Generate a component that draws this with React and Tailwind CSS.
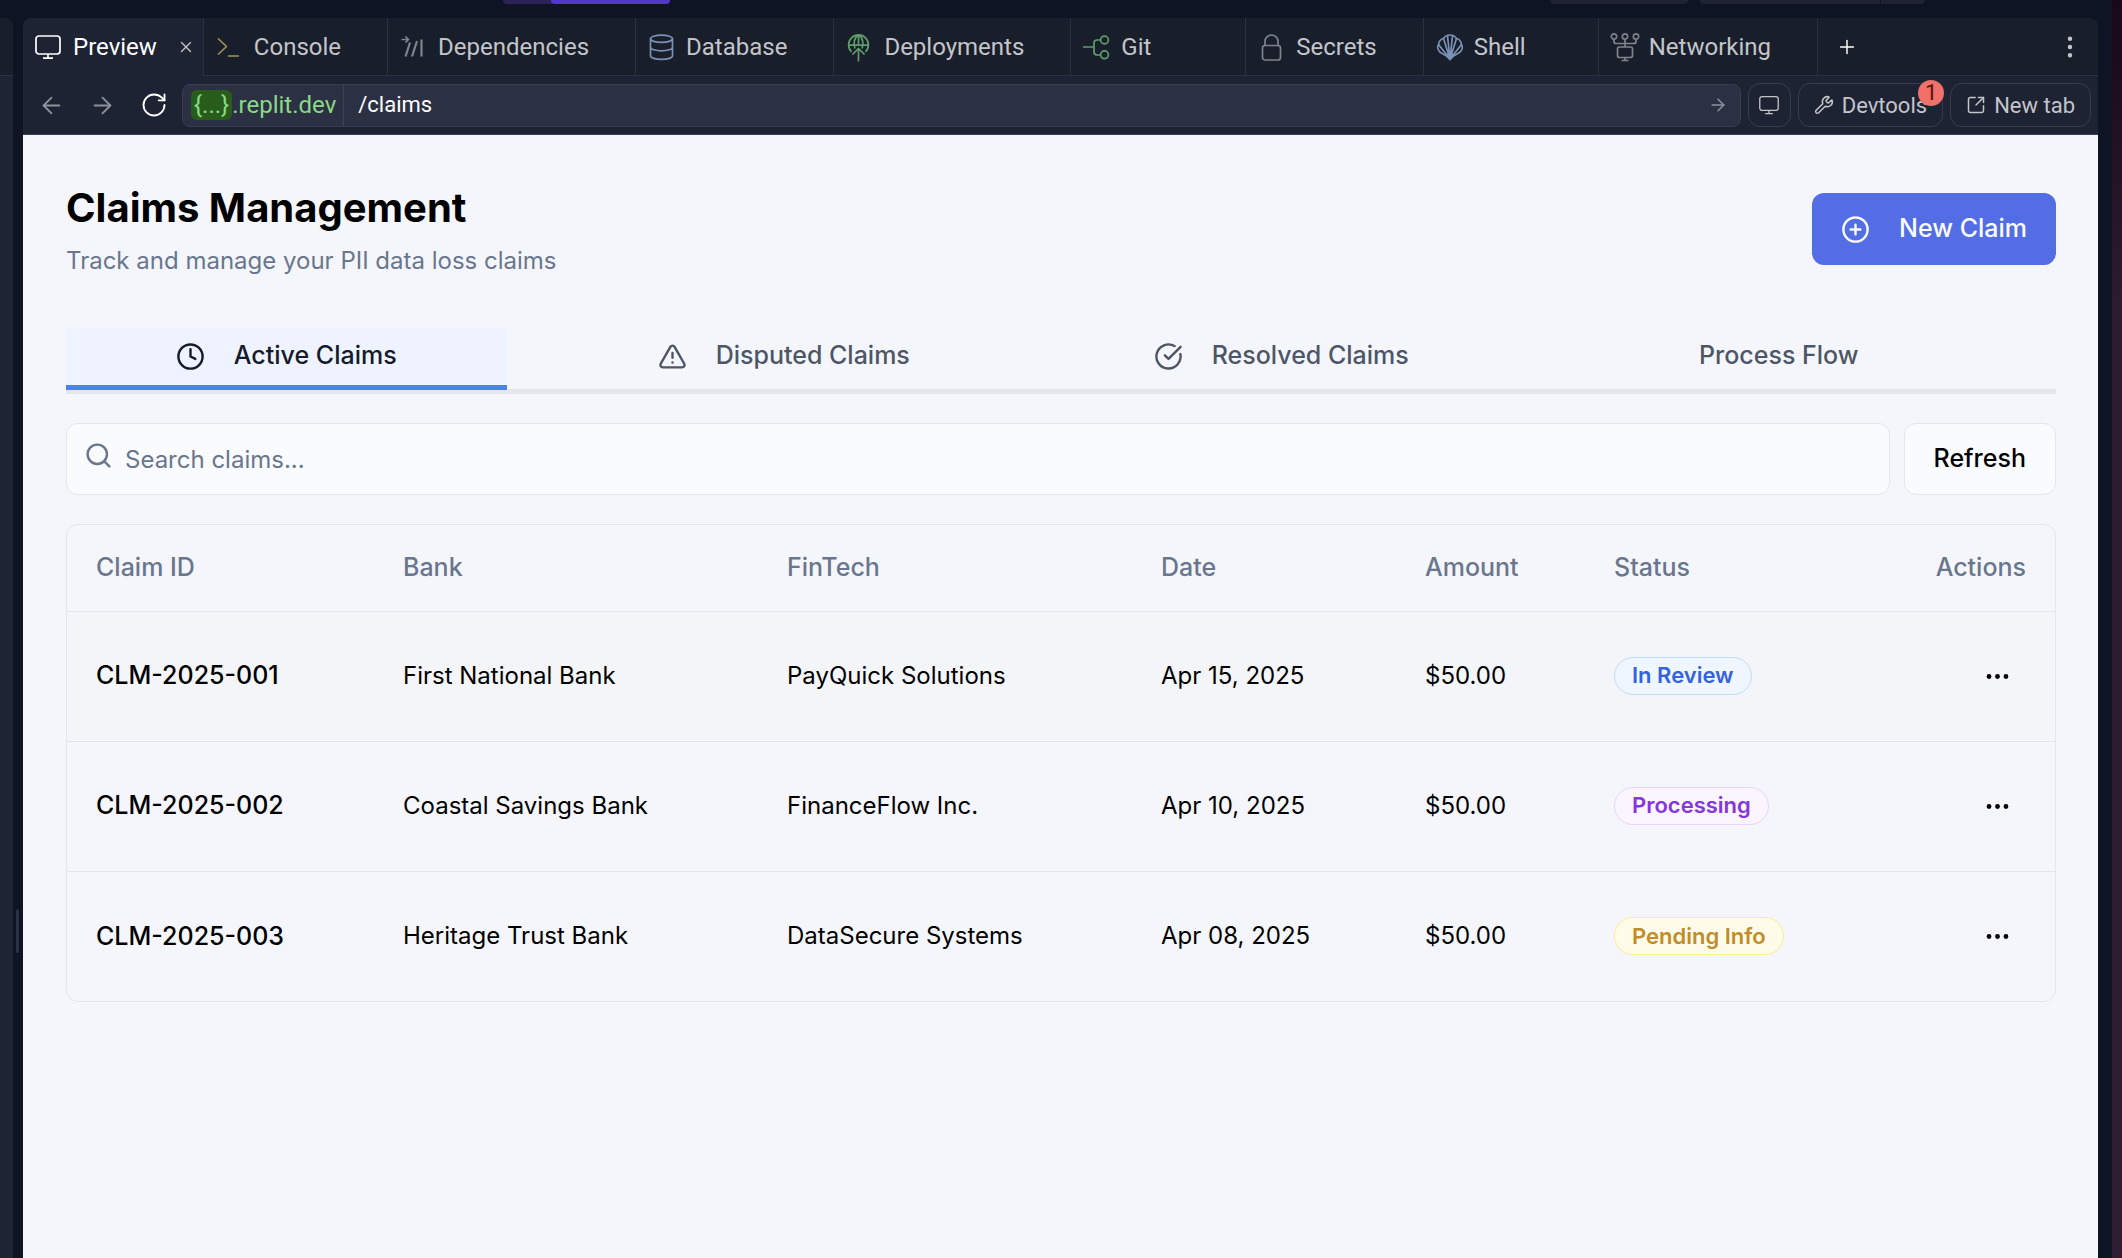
import React from "react";
import {
  ArrowLeft,
  ArrowRight,
  CircleCheckBig,
  CirclePlus,
  Clock,
  Ellipsis,
  EllipsisVertical,
  Plus,
  RotateCw,
  Search,
  SquareArrowOutUpRight,
  TriangleAlert,
  Wrench,
  X,
} from "lucide-react";

/* 26px line icons for the workspace tabs */
function Glyph({ className, children }) {
  return (
    <svg
      viewBox="0 0 26 26"
      fill="none"
      stroke="currentColor"
      strokeWidth="1.7"
      strokeLinejoin="round"
      aria-hidden="true"
      className={`shrink-0 overflow-visible ${className}`}
    >
      {children}
    </svg>
  );
}

const MonitorGlyph = ({ className }) => (
  <Glyph className={className}>
    <rect x="1" y="2" width="24" height="18" rx="3" />
    <path d="M13 20v4M8 24.2h10" />
  </Glyph>
);
const ConsoleGlyph = ({ className }) => (
  <Glyph className={className}>
    <path d="M2 4.5l8.5 8L2 20.5M12 22h11" />
  </Glyph>
);
const DependenciesGlyph = ({ className }) => (
  <Glyph className={className}>
    <path d="M1.500 5.500h7M5.500 2.500l3 3-3 3" />
    <path d="M10 8.500L5.500 22.500M17 7l-5 15.500M21.500 5.500v17" strokeWidth="2.200" />
  </Glyph>
);
const DatabaseGlyph = ({ className }) => (
  <Glyph className={className}>
    <ellipse cx="13.500" cy="4.800" rx="11" ry="3.600" />
    <path d="M2.500 4.800v17c0 2 4.900 3.600 11 3.600s11-1.600 11-3.600v-17M2.500 13.200c0 2 4.900 3.600 11 3.600s11-1.600 11-3.600" />
  </Glyph>
);
const DeploymentsGlyph = ({ className }) => (
  <Glyph className={className}>
    <path d="M5.500 17.800A9.900 9.900 0 1 1 19.500 17.800M3 11.200h19M9 14.500C6.800 10 8.500 3 12.500 1c4 2 5.700 9 3.500 13.500M12.500 1v10" />
    <path d="M12.500 27.500V15M6.500 20.500l6-6 6 6" />
  </Glyph>
);
const GitGlyph = ({ className }) => (
  <Glyph className={className}>
    <path d="M0 13h11M17.500 6H14a3 3 0 0 0-3 3v9a3 3 0 0 0 3 3h3.500" />
    <circle cx="21.500" cy="6" r="3.900" />
    <circle cx="21.500" cy="20.800" r="3.900" />
  </Glyph>
);
const LockGlyph = ({ className }) => (
  <Glyph className={className}>
    <rect x="4.500" y="11.500" width="18" height="14.500" rx="2.500" />
    <path d="M7 11.500V7.500a6.500 6.500 0 0 1 13 0v4" />
  </Glyph>
);
const ShellGlyph = ({ className }) => (
  <Glyph className={className}>
    <path d="M14 25.500L10.500 22 4.500 18.500C1.500 16 1 12.500 2.500 10.500 3 7 5 5 7.500 4.500 9 2 11.500 1 14 1s5 1 6.500 3.500C23 5 25 7 25.500 10.500 27 12.500 26.500 16 23.500 18.500L17.500 22z" />
    <path d="M14 25L2.500 10.500M14 25L7.500 4.500M14 25L11.500 2M14 25L16.500 2M14 25L20.500 4.500M14 25L25.500 10.500" />
    <path d="M14 25.500L9.500 20.500h9z" fill="currentColor" />
  </Glyph>
);
const NetworkGlyph = ({ className }) => (
  <Glyph className={className}>
    <circle cx="3" cy="2.500" r="2.700" />
    <circle cx="14" cy="2.500" r="2.700" />
    <circle cx="25" cy="2.500" r="2.700" />
    <path d="M3 5.200v2.300a2 2 0 0 0 2 2h18a2 2 0 0 0 2-2V5.200M14 5.200V13" />
    <rect x="6.500" y="13" width="15" height="10.500" rx="2" />
    <path d="M14 23.500v3M10.500 26.500h7" />
  </Glyph>
);

const workspaceTabs = [
  { label: "Console", icon: ConsoleGlyph, tint: "text-[#9d9459]" },
  { label: "Dependencies", icon: DependenciesGlyph, tint: "text-[#7f838d]" },
  { label: "Database", icon: DatabaseGlyph, tint: "text-[#7a90b5]" },
  { label: "Deployments", icon: DeploymentsGlyph, tint: "text-[#5f9e6a]" },
  { label: "Git", icon: GitGlyph, tint: "text-[#5f9e6a]" },
  { label: "Secrets", icon: LockGlyph, tint: "text-[#7f838d]" },
  { label: "Shell", icon: ShellGlyph, tint: "text-[#7a90b5]" },
  { label: "Networking", icon: NetworkGlyph, tint: "text-[#7f838d]" },
];

const claimTabs = [
  { label: "Active Claims", icon: Clock, active: true },
  { label: "Disputed Claims", icon: TriangleAlert },
  { label: "Resolved Claims", icon: CircleCheckBig },
  { label: "Process Flow" },
];

const claims = [
  {
    id: "CLM-2025-001",
    bank: "First National Bank",
    fintech: "PayQuick Solutions",
    date: "Apr 15, 2025",
    amount: "$50.00",
    status: "In Review",
    badge: "border-[#bfdbfe] bg-[#eff6ff] text-[#3563e0]",
  },
  {
    id: "CLM-2025-002",
    bank: "Coastal Savings Bank",
    fintech: "FinanceFlow Inc.",
    date: "Apr 10, 2025",
    amount: "$50.00",
    status: "Processing",
    badge: "border-[#e6d5fc] bg-[#faf5ff] text-[#8536dc]",
  },
  {
    id: "CLM-2025-003",
    bank: "Heritage Trust Bank",
    fintech: "DataSecure Systems",
    date: "Apr 08, 2025",
    amount: "$50.00",
    status: "Pending Info",
    badge: "border-[#fbee8d] bg-[#fefce8] text-[#c08c2c]",
  },
];

function TopBar() {
  return (
    <header className="flex h-[18px] shrink-0 items-start">
      <div className="ml-[503px] flex h-1 w-[167px] overflow-hidden rounded-b-md bg-[#2c2159]">
        <div className="ml-auto w-[119px] rounded-bl-md bg-[#5138c6]" />
      </div>
      <div className="mr-[187px] ml-auto flex h-1 gap-3">
        <div className="w-[138px] rounded-b-md bg-[#1e2231]" />
        <div className="flex w-[225px] gap-px">
          <div className="grow rounded-bl-md bg-[#1e2231]" />
          <div className="w-11 rounded-br-md bg-[#1e2231]" />
        </div>
      </div>
    </header>
  );
}

function WorkspaceTabs() {
  return (
    <div className="flex h-[58px] rounded-t-lg bg-[#191e2b] text-2xl text-[#c3c5ca]">
      <div className="flex items-center rounded-tl-lg border-r border-[#2b3042] bg-[#1e2333] pr-2 pl-3">
        <button type="button" className="flex items-center gap-3 text-white">
          <MonitorGlyph className="size-[26px]" />
          Preview
        </button>
        <button type="button" aria-label="Close Preview" className="ml-5 text-[#c3c5ca]">
          <X className="size-[18px]" strokeWidth={1.8} />
        </button>
      </div>
      <div className="flex grow border-b border-[#2b3042]">
        {workspaceTabs.map(({ label, icon: Icon, tint }) => (
          <button
            key={label}
            type="button"
            className="flex min-w-[175px] items-center gap-3 border-r border-[#2b3042] pr-[46px] pl-3"
          >
            <Icon className={`size-[26px] ${tint}`} />
            {label}
          </button>
        ))}
        <button type="button" aria-label="New tab" className="px-[18px] text-white">
          <Plus className="size-[22px]" strokeWidth={1.6} />
        </button>
        <button type="button" aria-label="More options" className="mr-3.5 ml-auto">
          <EllipsisVertical className="size-7" strokeWidth={1.8} />
        </button>
      </div>
    </div>
  );
}

function AddressBar() {
  return (
    <div className="flex h-[59px] items-center gap-[7px] border-b border-[#3b4052] bg-[#1e2333] pr-[7px] pl-[15px] text-[22px] text-[#c3c5ca]">
      <div className="mr-[7px] flex items-center gap-6">
        <button type="button" aria-label="Back" className="text-[#8f929b]">
          <ArrowLeft className="size-[27px]" strokeWidth={1.6} />
        </button>
        <button type="button" aria-label="Forward" className="text-[#8f929b]">
          <ArrowRight className="size-[27px]" strokeWidth={1.6} />
        </button>
        <button type="button" aria-label="Reload" className="text-white">
          <RotateCw className="size-7" strokeWidth={1.6} />
        </button>
      </div>
      <div className="flex h-[43px] min-w-0 grow items-center rounded-lg border border-[#373c50] bg-[#2c3043] pr-3 text-2xl">
        <div className="flex h-full items-center border-r border-[#3d4257] pr-[7px] pl-2 text-[#8ad888]">
          <span className="rounded-md bg-[#285c1b] px-[3px] leading-[30px]">{"{...}"}</span>
          <span>.replit.dev</span>
        </div>
        <input
          aria-label="Path"
          defaultValue="/claims"
          className="min-w-0 grow bg-transparent px-3.5 text-[22px] text-white outline-none"
        />
        <button type="button" aria-label="Go" className="text-[#8f929b]">
          <ArrowRight className="size-5" strokeWidth={1.8} />
        </button>
      </div>
      <button
        type="button"
        aria-label="Device size"
        className="grid h-11 w-[43px] shrink-0 place-items-center rounded-xl border border-[#373c50]"
      >
        <MonitorGlyph className="size-5" />
      </button>
      <button
        type="button"
        className="relative flex h-11 shrink-0 items-center gap-2 rounded-xl border border-[#373c50] px-[15px]"
      >
        <Wrench className="size-5" strokeWidth={1.8} />
        Devtools
        <span className="absolute -top-1 -right-0.5 grid size-[26px] place-items-center rounded-full bg-[#f0706a] leading-none text-[#5c120d]">
          1
        </span>
      </button>
      <button
        type="button"
        className="flex h-11 shrink-0 items-center gap-2 rounded-xl border border-[#373c50] px-[15px]"
      >
        <SquareArrowOutUpRight className="size-5" strokeWidth={1.8} />
        New tab
      </button>
    </div>
  );
}

function ClaimsTable() {
  return (
    <div className="mt-[29px] overflow-hidden rounded-xl border border-[#e3e6ec]">
      <table className="w-full table-fixed text-left text-2xl">
        <colgroup>
          <col className="w-[307px]" />
          <col className="w-[384px]" />
          <col className="w-[374px]" />
          <col className="w-[264px]" />
          <col className="w-[189px]" />
          <col className="w-[290px]" />
          <col className="w-[180px]" />
        </colgroup>
        <thead>
          <tr className="h-[86px] text-[25px] text-[#69768d]">
            {["Claim ID", "Bank", "FinTech", "Date", "Amount", "Status"].map((name) => (
              <th key={name} className="px-[29px] font-medium">
                {name}
              </th>
            ))}
            <th className="px-[29px] text-right font-medium">Actions</th>
          </tr>
        </thead>
        <tbody>
          {claims.map((claim) => (
            <tr key={claim.id} className="h-[130px] border-t border-[#e1e5eb] first:bg-[#f4f5f9]">
              <td className="px-[29px] text-[25px] font-medium">{claim.id}</td>
              <td className="px-[29px]">{claim.bank}</td>
              <td className="px-[29px]">{claim.fintech}</td>
              <td className="px-[29px]">{claim.date}</td>
              <td className="px-[29px]">{claim.amount}</td>
              <td className="px-[29px]">
                <span
                  className={`inline-flex h-[38px] items-center rounded-full border px-[17px] text-[22px] font-semibold ${claim.badge}`}
                >
                  {claim.status}
                </span>
              </td>
              <td className="px-[29px] text-right">
                <button
                  type="button"
                  aria-label={`Actions for ${claim.id}`}
                  className="inline-grid h-[58px] w-[58px] place-items-center align-middle"
                >
                  <Ellipsis className="size-[29px]" strokeWidth={2} />
                </button>
              </td>
            </tr>
          ))}
        </tbody>
      </table>
    </div>
  );
}

function ClaimsPage() {
  return (
    <main className="grow bg-[#f5f6fb] pt-[46px] pr-[42px] pb-12 pl-[43px] font-['Inter',sans-serif] text-black">
      <div className="flex items-center justify-between">
        <div>
          <h1 className="text-[40px] leading-[54px] font-bold">Claims Management</h1>
          <p className="mt-2.5 text-2xl text-[#69768d]">
            Track and manage your PII data loss claims
          </p>
        </div>
        <button
          type="button"
          className="flex h-[72px] items-center gap-[29px] rounded-xl bg-[#536de4] px-[29px] text-[25px] font-medium text-[#fafbff]"
        >
          <CirclePlus className="size-[29px]" />
          New Claim
        </button>
      </div>

      <div
        role="tablist"
        className="mt-[50px] grid grid-cols-4 border-b-[5px] border-[#e5e6eb]"
      >
        {claimTabs.map(({ label, icon: Icon, active }) => (
          <button
            key={label}
            type="button"
            role="tab"
            aria-selected={Boolean(active)}
            className={`mr-[57px] -mb-px flex h-[63px] items-center justify-center gap-[29px] border-b-[5px] text-[25px] font-medium ${
              active
                ? "border-[#4c82ee] bg-[#eff3ff] text-[#141b2b]"
                : "border-transparent text-[#4d5666]"
            }`}
          >
            {Icon && <Icon className="size-[29px]" />}
            {label}
          </button>
        ))}
      </div>

      <div className="mt-[29px] flex gap-3.5">
        <div className="relative grow">
          <Search className="absolute top-[18px] left-[18px] size-[29px] text-[#69768d]" />
          <input
            type="search"
            aria-label="Search claims"
            placeholder="Search claims..."
            className="h-[72px] w-full rounded-xl border border-[#e3e6ec] bg-[#fafbff] pr-4 pl-[58px] text-2xl outline-none placeholder:text-[#69768d]"
          />
        </div>
        <button
          type="button"
          className="h-[72px] rounded-xl border border-[#e3e6ec] bg-[#fafbff] px-[29px] text-[25px] font-medium"
        >
          Refresh
        </button>
      </div>

      <ClaimsTable />
    </main>
  );
}

export default function App() {
  return (
    <div className="flex min-h-screen bg-[#0e1423] font-['Roboto',sans-serif]">
      <div className="flex min-w-0 grow flex-col">
        <TopBar />
        <div className="flex grow">
          <div className="w-[13px] shrink-0 rounded-tr-lg bg-[#1e2433]">
            <div className="h-[58px] rounded-tr-lg border-b border-[#2b3042] bg-[#191e2b]" />
          </div>
          <div className="w-2.5 shrink-0 pt-[891px] pl-[3px]">
            <div className="h-11 w-[3px] rounded-full bg-[#2c3043]" />
          </div>
          <div className="flex min-w-0 grow flex-col">
            <WorkspaceTabs />
            <AddressBar />
            <ClaimsPage />
          </div>
          <div className="w-3.5 shrink-0" />
        </div>
      </div>
      <div className="w-2.5 shrink-0 bg-linear-to-b from-[#170919] via-[#2c1c30] via-25% to-[#2f1d33]" />
    </div>
  );
}
